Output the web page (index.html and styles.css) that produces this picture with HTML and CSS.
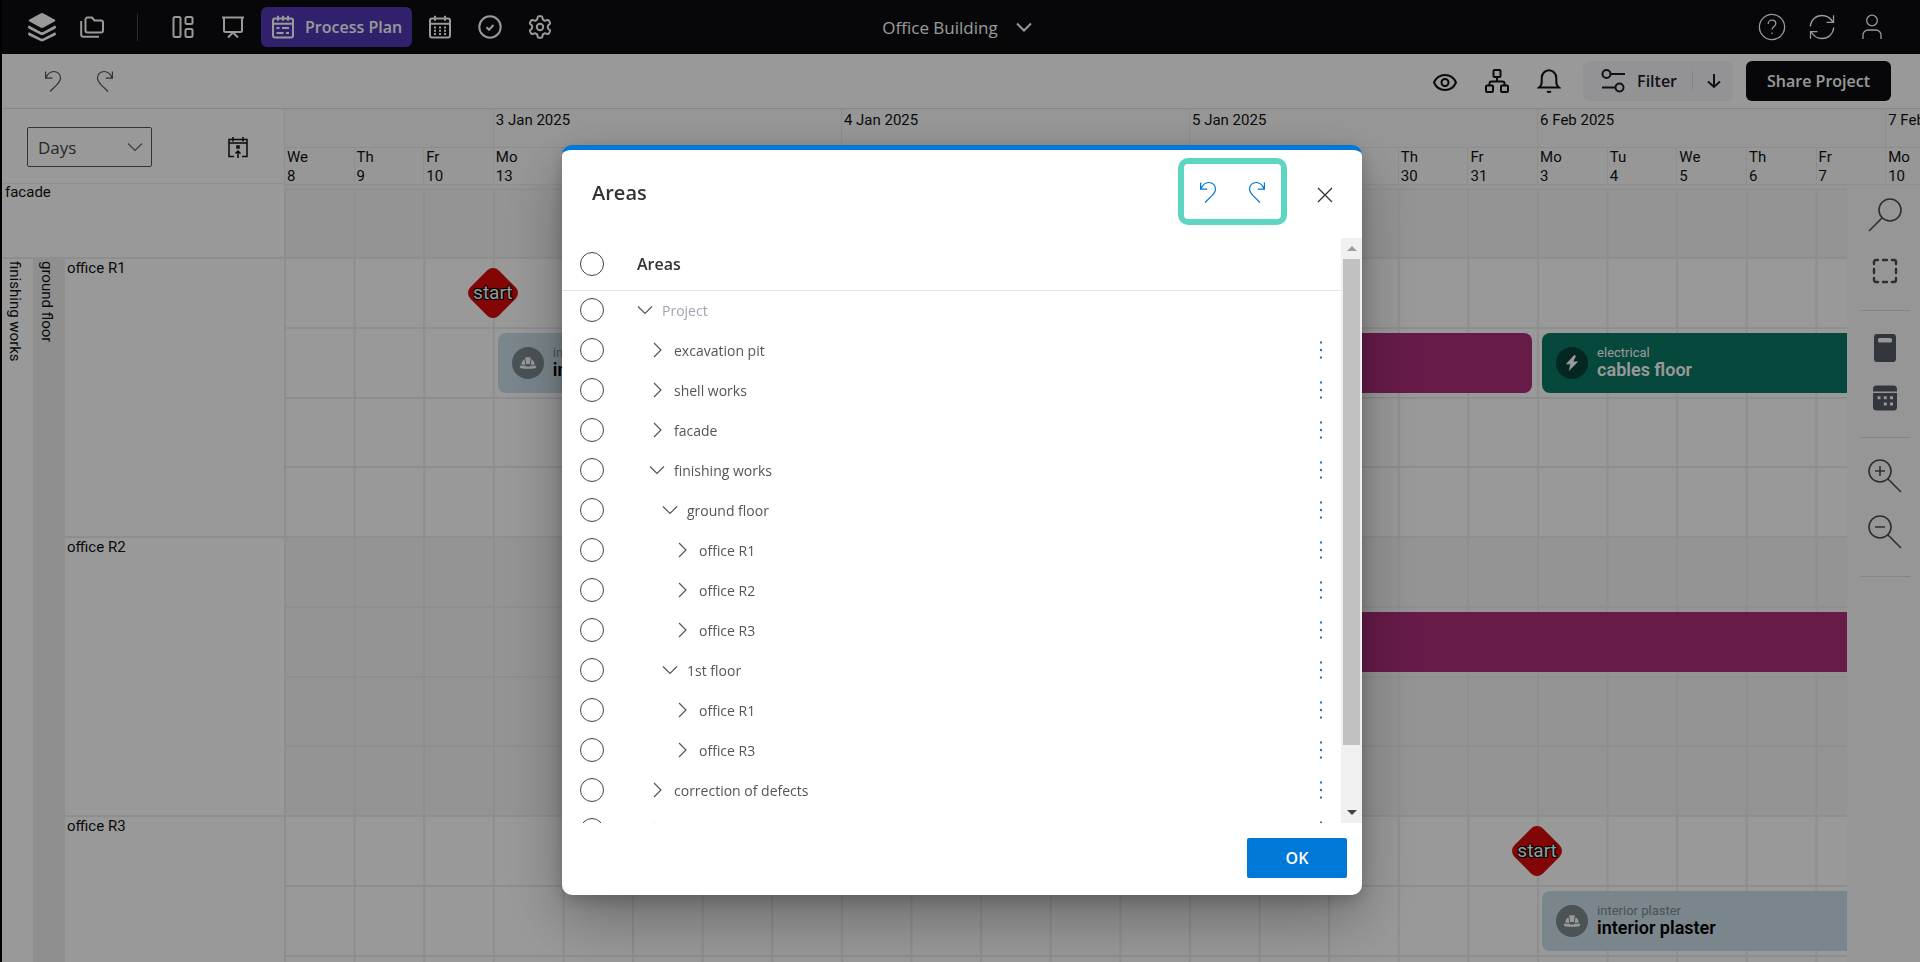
FILE: index.html
```html
<!DOCTYPE html>
<html lang="en">
<head>
<meta charset="utf-8">
<title>Office Building - Process Plan</title>
<link rel="stylesheet" href="styles.css">
</head>
<body>
<svg class="sprite" aria-hidden="true">
  <symbol id="i-undo" viewBox="0 0 18 22"><path d="M1.6 1.5v6.7h6.7M1.9 7.9C3.5 4 6.300 1.500 9.800 1.500c4 0 6.700 3 6.700 6.500 0 3-1.600 4.700-4 7.200L6 21.500"/></symbol>
  <symbol id="i-redo" viewBox="0 0 18 22"><path d="M16.400 1.500v6.700H9.700M16.100 7.900C14.500 4 11.700 1.500 8.200 1.500c-4 0-6.700 3-6.700 6.500 0 3 1.600 4.700 4 7.200l6.500 6.300"/></symbol>
  <symbol id="i-down" viewBox="0 0 16 16"><path d="M1 4.500l7 7 7-7"/></symbol>
  <symbol id="i-right" viewBox="0 0 16 16"><path d="M5 1l7 7-7 7"/></symbol>
  <symbol id="i-more" viewBox="0 0 4 20"><path d="M1 1.500h2v2H1zM1 9h2v2H1zM1 16.500h2v2H1z"/></symbol>
  <symbol id="i-helmet" viewBox="0 0 20 16"><path d="M7 1.500h6l-.8 7.500H7.800zM6 3.500C3.800 5 2.700 7.500 2.500 10h4.500zM14 3.500c2.200 1.500 3.300 4 3.500 6.500H13zM1 11h6.300l.4 1h4.600l.4-1H19v2.500c-5.500 1.300-12.500 1.300-18 0z"/></symbol>
</svg>

<div class="app">
  <header class="topbar">
    <nav class="topbar-side" aria-label="Modules">
      <button class="nav-btn" aria-label="Home"><svg class="logo" viewBox="0 0 30 30"><path d="M13.500 1.500q1.500-.8 3 0l11 6q1.800 1 0 2l-11 6q-1.500.8-3 0l-11-6q-1.800-1 0-2z"/><path d="M2 13.500l11.500 6.300q1.500.8 3 0L28 13.500q2 1.800 0 3.200l-11.500 6.100q-1.500.8-3 0L2 16.700q-2-1.400 0-3.200z"/><path d="M2 20.200l11.500 6.100q1.500.8 3 0L28 20.200q2 1.800 0 3.200l-11.500 5.600q-1.500.8-3 0L2 23.400q-2-1.400 0-3.200z"/></svg></button>
      <button class="nav-btn" aria-label="Projects"><svg class="ico" viewBox="0 0 24 24"><path d="M5.500 4.500v11a2 2 0 0 0 2 2H21a2 2 0 0 0 2-2V7.500a2 2 0 0 0-2-2h-6.500l-2.500-3H7.500a2 2 0 0 0-2 2zM1.200 6v13.500a2.200 2.200 0 0 0 2.200 2.200H19"/></svg></button>
      <span class="nav-rule"></span>
      <button class="nav-btn" aria-label="Dashboard"><svg class="ico" viewBox="0 0 24 24"><rect x="2.500" y="2" width="7" height="20" rx="1.500"/><rect x="14.500" y="2" width="7" height="7" rx="1.500"/><rect x="14.500" y="14" width="7" height="8" rx="1.500"/></svg></button>
      <button class="nav-btn" aria-label="Presentation"><svg class="ico" viewBox="0 0 24 24"><path d="M1 2.500h22M3 2.500v13a1.500 1.500 0 0 0 1.500 1.500h15a1.500 1.500 0 0 0 1.500-1.500v-13M7 22.500l5-5 5 5"/></svg></button>
      <button class="nav-btn nav-current"><svg class="ico" viewBox="0 0 24 24"><rect x="2" y="3.500" width="20" height="19" rx="2"/><path d="M7 .8v5M12 .8v5M17 .8v5M2 8.800h20M5.500 13h3M11 13h7M5.500 18h7M15 18h3"/></svg>Process Plan</button>
      <button class="nav-btn" aria-label="Calendar"><svg class="ico" viewBox="0 0 24 24"><rect x="2" y="3.500" width="20" height="19" rx="2"/><path d="M7 .8v5M17 .8v5M2 8.800h20M6 12.500h2M11 12.500h2M16 12.500h2M6 15.800h2M11 15.800h2M16 15.800h2M6 19h2M11 19h2M16 19h2"/></svg></button>
      <button class="nav-btn" aria-label="Tasks"><svg class="ico" viewBox="0 0 24 24"><circle cx="12" cy="12" r="10.700"/><path d="M8.500 12.200l2.500 2.500 4.500-4.700"/></svg></button>
      <button class="nav-btn" aria-label="Settings"><svg class="ico" viewBox="0 0 24 24"><path d="M10.800 1.200h2.400q.9 0 1.100 1l.4 1.900q.2.600.8.900l.9.500q.6.300 1.200.1l1.800-.6q.9-.3 1.400.5l1.200 2.100q.4.800-.2 1.400l-1.500 1.300q-.5.500-.5 1.100v1.200q0 .6.500 1.100l1.500 1.300q.6.600.2 1.400l-1.200 2.100q-.5.800-1.400.5l-1.800-.6q-.6-.2-1.200.1l-.9.500q-.6.300-.8.900l-.4 1.900q-.2 1-1.100 1h-2.400q-.9 0-1.100-1l-.4-1.900q-.2-.6-.8-.9l-.9-.5q-.6-.3-1.200-.1l-1.800.6q-.9.300-1.400-.5l-1.200-2.100q-.4-.8.2-1.400l1.500-1.300q.5-.5.5-1.100v-1.200q0-.6-.5-1.100L2.200 9q-.6-.6-.2-1.400l1.200-2.100q.5-.8 1.400-.5l1.800.6q.6.200 1.200-.1l.9-.5q.6-.3.8-.9l.4-1.900q.2-1 1.100-1z"/><circle cx="12" cy="12" r="3.200"/></svg></button>
    </nav>
    <button class="project-btn">Office Building<svg class="ico ico-16" viewBox="0 0 16 16"><use href="#i-down"/></svg></button>
    <div class="topbar-side topbar-end">
      <button class="nav-btn" aria-label="Help"><svg class="ico ico-28 thin" viewBox="0 0 28 28"><circle cx="14" cy="14" r="12.600"/><path d="M10.200 11c0-2.500 1.700-3.800 3.800-3.800s3.800 1.400 3.800 3.500c0 2.600-3.700 3-3.700 5.800M14 19.400v1.600"/></svg></button>
      <button class="nav-btn" aria-label="Refresh"><svg class="ico ico-28 thin" viewBox="0 0 28 28"><path d="M2.300 13.500C2.800 7 7.800 2.500 14 2.500c4.700 0 8.500 2.500 10.800 6.500M25.500 2.300v7h-7M25.700 14.500C25.200 21 20.200 25.500 14 25.500c-4.700 0-8.500-2.500-10.800-6.500M2.500 25.700v-7h7"/></svg></button>
      <button class="nav-btn" aria-label="Account"><svg class="ico ico-28 thin" viewBox="0 0 28 28"><circle cx="14" cy="7.500" r="5.300"/><path d="M5 26v-4a5 5 0 0 1 5-5h8a5 5 0 0 1 5 5v4"/></svg></button>
    </div>
  </header>

  <div class="toolbar">
    <div class="tool-group">
      <button class="tool-btn faint" aria-label="Undo"><svg class="arc"><use href="#i-undo"/></svg></button>
      <button class="tool-btn faint" aria-label="Redo"><svg class="arc"><use href="#i-redo"/></svg></button>
    </div>
    <div class="tool-group">
      <button class="tool-btn" aria-label="View"><svg class="ico" viewBox="0 0 24 24"><path d="M1 13.500C3 9 7 6 12 6s9 3 11 7.500C21 18 17 21 12 21S3 18 1 13.500z"/><circle cx="12" cy="13.500" r="3.500"/></svg></button>
      <button class="tool-btn" aria-label="Structure"><svg class="ico" viewBox="0 0 24 24"><rect x="8.500" y="1" width="7" height="7" rx="1"/><rect x="1" y="16.500" width="7" height="6.500" rx="1"/><rect x="16" y="16.500" width="7" height="6.500" rx="1"/><path d="M12 8v4.500M4.500 16.500v-2a2 2 0 0 1 2-2h11a2 2 0 0 1 2 2v2"/></svg></button>
      <button class="tool-btn" aria-label="Notifications"><svg class="ico" viewBox="0 0 24 24"><path d="M2 18.500h20c-1.800-1.300-2.700-3-2.700-5.500V9A7.300 7.800 0 0 0 4.700 9v4c0 2.500-.9 4.200-2.700 5.500zM10 22.300q2 1.500 4 0"/></svg></button>
      <div class="filter">
        <button class="filter-main"><svg class="ico" viewBox="0 0 24 24"><circle cx="5.500" cy="5" r="4"/><path d="M9.500 5H24M1 18.500h13.500"/><circle cx="18.500" cy="18.500" r="4"/></svg>Filter</button>
        <button class="filter-more" aria-label="Filter options"><svg class="ico ico-16" viewBox="0 0 16 16"><path d="M8 1v13M2 8.500L8 14l6-5.500"/></svg></button>
      </div>
      <button class="share-btn">Share Project</button>
    </div>
  </div>

  <main class="plan">
    <section class="areas-col" aria-label="Areas">
      <div class="corner">
        <div class="scale"><select class="scale-select" aria-label="Time scale"><option>Days</option></select><svg class="ico ico-16 scale-arrow"><use href="#i-down"/></svg></div>
        <button class="today-btn" aria-label="Go to today"><svg class="ico ico-22" viewBox="0 0 22 22"><path d="M7 20.500H2v-17h18v17h-5M2 7h18M6 1v4.500M16 1v4.500M11 22v-7M8.500 17.500L11 15l2.500 2.500M10 10h2v2h-2z"/></svg></button>
      </div>
      <div class="area-top">facade</div>
      <div class="area-group">
        <div class="area-side">finishing works</div>
        <div class="area-side shaded">ground floor</div>
        <div class="rooms">
          <div class="room">office R1</div>
          <div class="room">office R2</div>
          <div class="room">office R3</div>
        </div>
      </div>
    </section>

    <section class="timeline" aria-label="Timeline">
      <div class="months cols">
        <span class="month m0"></span><span class="month">3 Jan 2025</span><span class="month">4 Jan 2025</span><span class="month">5 Jan 2025</span><span class="month">6 Feb 2025</span><span class="month m-last">7 Feb 2025</span>
      </div>
      <div class="days cols">
        <span class="day">We<br>8</span><span class="day">Th<br>9</span><span class="day">Fr<br>10</span><span class="day">Mo<br>13</span><span class="day">Tu<br>14</span><span class="day">We<br>15</span><span class="day">Th<br>16</span><span class="day">Fr<br>17</span><span class="day">Mo<br>20</span><span class="day">Tu<br>21</span><span class="day">We<br>22</span><span class="day">Th<br>23</span><span class="day">Fr<br>24</span><span class="day">Mo<br>27</span><span class="day">Tu<br>28</span><span class="day">We<br>29</span><span class="day">Th<br>30</span><span class="day">Fr<br>31</span><span class="day">Mo<br>3</span><span class="day">Tu<br>4</span><span class="day">We<br>5</span><span class="day">Th<br>6</span><span class="day">Fr<br>7</span><span class="day d-last">Mo<br>10</span>
      </div>
      <div class="band band-top alt"><div class="lane cols"></div></div>
      <div class="band">
        <div class="lane cols"><div class="milestone at-13"><span class="milestone-label">start</span></div></div>
        <div class="lane cols">
          <div class="task plaster early"><span class="badge"><svg class="badge-ico"><use href="#i-helmet"/></svg></span><span class="task-text"><small class="trade">interior plaster</small><b class="task-name">interior plaster</b></span></div>
          <div class="task magenta mid"></div>
          <div class="task green late"><span class="badge"><svg class="badge-ico" viewBox="0 0 20 18"><path d="M12.500 0L3 10.500h5L6.500 18 17 7.300h-5.500L14.500 1z"/></svg></span><span class="task-text"><small class="trade">electrical</small><b class="task-name">cables floor</b></span></div>
        </div>
        <div class="lane cols"></div>
        <div class="lane cols"></div>
      </div>
      <div class="band alt">
        <div class="lane cols"></div>
        <div class="lane cols"><div class="task magenta long"></div></div>
        <div class="lane cols"></div>
        <div class="lane cols"></div>
      </div>
      <div class="band">
        <div class="lane cols"><div class="milestone at-3"><span class="milestone-label">start</span></div></div>
        <div class="lane cols"><div class="task plaster late"><span class="badge"><svg class="badge-ico"><use href="#i-helmet"/></svg></span><span class="task-text"><small class="trade">interior plaster</small><b class="task-name">interior plaster</b></span></div></div>
        <div class="lane cols"></div>
        <div class="lane cols"></div>
      </div>

      <aside class="rail" aria-label="Plan tools">
        <div class="rail-group">
          <button class="rail-btn" aria-label="Search"><svg class="ico ico-36 mid-stroke" viewBox="0 0 36 36"><circle cx="23" cy="13" r="11"/><path d="M15.200 20.800L2 34"/></svg></button>
          <button class="rail-btn" aria-label="Select area"><svg class="ico ico-28 dash" viewBox="0 0 28 28"><path d="M3 7V5q0-2 2-2h2M21 3h2q2 0 2 2v2M25 21v2q0 2-2 2h-2M7 25H5q-2 0-2-2v-2M12 3h4M12 25h4M3 12v4M25 12v4"/></svg></button>
        </div>
        <div class="rail-group tight">
          <button class="rail-btn" aria-label="Calculator"><svg class="ico-28 solid" viewBox="0 0 28 28"><path fill-rule="evenodd" d="M6 0h16a3 3 0 0 1 3 3v22a3 3 0 0 1-3 3H6a3 3 0 0 1-3-3V3a3 3 0 0 1 3-3zm2.500 4a1.500 1.500 0 0 0-1.500 1.500V7a1.500 1.500 0 0 0 1.500 1.500h11A1.500 1.500 0 0 0 21 7V5.500A1.500 1.500 0 0 0 19.500 4z"/></svg></button>
          <button class="rail-btn" aria-label="Calendar view"><svg class="ico-28 solid" viewBox="0 0 28 28"><path d="M2 7.500V5a3.500 3.500 0 0 1 3.500-3.500h17A3.500 3.500 0 0 1 26 5v2.500z"/><path fill-rule="evenodd" d="M2 9h24v14a3.500 3.500 0 0 1-3.500 3.500h-17A3.500 3.500 0 0 1 2 23zM6.500 12.200v3h3v-3zm6.300 0v3h3v-3zm6.200 0v3h3v-3zm-6.200 6.300v3h3v-3zm6.200 0v3h3v-3z"/></svg></button>
        </div>
        <div class="rail-group zooms">
          <button class="rail-btn" aria-label="Zoom in"><svg class="ico ico-36 mid-stroke" viewBox="0 0 36 36"><circle cx="13" cy="13" r="11"/><path d="M20.800 20.800L34 34M13 8v10M8 13h10"/></svg></button>
          <button class="rail-btn" aria-label="Zoom out"><svg class="ico ico-36 mid-stroke" viewBox="0 0 36 36"><circle cx="13" cy="13" r="11"/><path d="M20.800 20.800L34 34M8 13h10"/></svg></button>
        </div>
      </aside>
    </section>
  </main>
</div>

<div class="overlay">
  <div class="dialog" role="dialog" aria-modal="true" aria-labelledby="dlg-title">
    <div class="dialog-head">
      <h2 class="dialog-title" id="dlg-title">Areas</h2>
      <div class="history">
        <button class="history-btn" aria-label="Undo"><svg class="arc"><use href="#i-undo"/></svg></button>
        <button class="history-btn" aria-label="Redo"><svg class="arc"><use href="#i-redo"/></svg></button>
      </div>
      <button class="close-btn" aria-label="Close"><svg class="ico ico-16 thin" viewBox="0 0 16 16"><path d="M1 1l14 14M15 1L1 15"/></svg></button>
    </div>
    <div class="dialog-body">
      <div class="tree-wrap">
        <table class="tree">
          <thead><tr><th class="c-check"><input class="check" type="checkbox" aria-label="Select all"></th><th class="c-name">Areas</th><th class="c-more"></th></tr></thead>
          <tbody>
            <tr><td class="c-check"><input class="check" type="checkbox" aria-labelledby="a0"></td><td class="c-name root"><svg class="twist"><use href="#i-down"/></svg><span id="a0">Project</span></td><td class="c-more"></td></tr>
            <tr><td class="c-check"><input class="check" type="checkbox" aria-labelledby="a1"></td><td class="c-name l1"><svg class="twist"><use href="#i-right"/></svg><span id="a1">excavation pit</span></td><td class="c-more"><button class="more" aria-label="More"><svg class="dots"><use href="#i-more"/></svg></button></td></tr>
            <tr><td class="c-check"><input class="check" type="checkbox" aria-labelledby="a2"></td><td class="c-name l1"><svg class="twist"><use href="#i-right"/></svg><span id="a2">shell works</span></td><td class="c-more"><button class="more" aria-label="More"><svg class="dots"><use href="#i-more"/></svg></button></td></tr>
            <tr><td class="c-check"><input class="check" type="checkbox" aria-labelledby="a3"></td><td class="c-name l1"><svg class="twist"><use href="#i-right"/></svg><span id="a3">facade</span></td><td class="c-more"><button class="more" aria-label="More"><svg class="dots"><use href="#i-more"/></svg></button></td></tr>
            <tr><td class="c-check"><input class="check" type="checkbox" aria-labelledby="a4"></td><td class="c-name l1"><svg class="twist"><use href="#i-down"/></svg><span id="a4">finishing works</span></td><td class="c-more"><button class="more" aria-label="More"><svg class="dots"><use href="#i-more"/></svg></button></td></tr>
            <tr><td class="c-check"><input class="check" type="checkbox" aria-labelledby="a5"></td><td class="c-name l2"><svg class="twist"><use href="#i-down"/></svg><span id="a5">ground floor</span></td><td class="c-more"><button class="more" aria-label="More"><svg class="dots"><use href="#i-more"/></svg></button></td></tr>
            <tr><td class="c-check"><input class="check" type="checkbox" aria-labelledby="a6"></td><td class="c-name l3"><svg class="twist"><use href="#i-right"/></svg><span id="a6">office R1</span></td><td class="c-more"><button class="more" aria-label="More"><svg class="dots"><use href="#i-more"/></svg></button></td></tr>
            <tr><td class="c-check"><input class="check" type="checkbox" aria-labelledby="a7"></td><td class="c-name l3"><svg class="twist"><use href="#i-right"/></svg><span id="a7">office R2</span></td><td class="c-more"><button class="more" aria-label="More"><svg class="dots"><use href="#i-more"/></svg></button></td></tr>
            <tr><td class="c-check"><input class="check" type="checkbox" aria-labelledby="a8"></td><td class="c-name l3"><svg class="twist"><use href="#i-right"/></svg><span id="a8">office R3</span></td><td class="c-more"><button class="more" aria-label="More"><svg class="dots"><use href="#i-more"/></svg></button></td></tr>
            <tr><td class="c-check"><input class="check" type="checkbox" aria-labelledby="a9"></td><td class="c-name l2"><svg class="twist"><use href="#i-down"/></svg><span id="a9">1st floor</span></td><td class="c-more"><button class="more" aria-label="More"><svg class="dots"><use href="#i-more"/></svg></button></td></tr>
            <tr><td class="c-check"><input class="check" type="checkbox" aria-labelledby="a10"></td><td class="c-name l3"><svg class="twist"><use href="#i-right"/></svg><span id="a10">office R1</span></td><td class="c-more"><button class="more" aria-label="More"><svg class="dots"><use href="#i-more"/></svg></button></td></tr>
            <tr><td class="c-check"><input class="check" type="checkbox" aria-labelledby="a11"></td><td class="c-name l3"><svg class="twist"><use href="#i-right"/></svg><span id="a11">office R3</span></td><td class="c-more"><button class="more" aria-label="More"><svg class="dots"><use href="#i-more"/></svg></button></td></tr>
            <tr><td class="c-check"><input class="check" type="checkbox" aria-labelledby="a12"></td><td class="c-name l1"><svg class="twist"><use href="#i-right"/></svg><span id="a12">correction of defects</span></td><td class="c-more"><button class="more" aria-label="More"><svg class="dots"><use href="#i-more"/></svg></button></td></tr>
            <tr><td class="c-check"><input class="check" type="checkbox" aria-label="Next area"></td><td class="c-name l1"><svg class="twist"><use href="#i-right"/></svg></td><td class="c-more"><button class="more" aria-label="More"><svg class="dots"><use href="#i-more"/></svg></button></td></tr>
          </tbody>
        </table>
      </div>
      <div class="scrollbar" aria-hidden="true"><span class="scroll-arrow up"></span><span class="scroll-thumb"></span><span class="scroll-arrow dn"></span></div>
    </div>
    <div class="dialog-foot"><button class="ok-btn">OK</button></div>
  </div>
</div>
</body>
</html>
```
FILE: styles.css
```css
* { box-sizing: border-box; }
:root {
  --ui: "Open Sans", "Noto Sans", sans-serif;
  --plan: Roboto, "Liberation Sans", sans-serif;
  --line: #ededed;
}
body { margin: 0; height: 100vh; overflow: hidden; font-family: var(--ui); font-size: 16px; color: #111; background: #fff; }
button { font: inherit; color: inherit; border: 0; padding: 0; background: none; display: flex; align-items: center; justify-content: center; }
svg { display: block; flex: none; }
.sprite { position: absolute; width: 0; height: 0; }
.ico, .arc, .twist { fill: none; stroke: currentColor; stroke-width: 2; }
.ico { width: 24px; height: 24px; }
.ico-16 { width: 16px; height: 16px; }
.ico-22 { width: 22px; height: 22px; stroke-width: 1.5; }
.ico-28 { width: 28px; height: 28px; }
.ico-36 { width: 36px; height: 36px; }
.thin { stroke-width: 1.3; }
.mid-stroke { stroke-width: 1.6; }
.dash { stroke-width: 2.4; stroke-linecap: round; }
.solid { fill: #565a66; }
.arc { width: 18px; height: 22px; stroke-width: 1.2; }

.app { display: flex; flex-direction: column; height: 100vh; border-left: 2px solid #000; }

.topbar { flex: none; display: grid; grid-template-columns: 1fr auto 1fr; align-items: center; height: 54px; padding: 0 23px 0 15px; background: #0c0c11; color: #fff; }
.topbar-side { display: flex; align-items: center; }
.topbar-end { justify-content: flex-end; }
.nav-btn { width: 50px; height: 40px; }
.nav-rule { width: 1px; height: 27px; margin: 0 20px; background: #4a4a50; }
.nav-current { width: auto; margin: 0 3px; padding: 0 10px; gap: 10px; border-radius: 6px; background: #5238b6; font-weight: 600; }
.logo { width: 30px; height: 30px; fill: currentColor; }
.project-btn { gap: 18px; font-size: 17px; }

.toolbar { flex: none; display: flex; justify-content: space-between; align-items: center; height: 55px; padding: 0 29px 0 26px; border-bottom: 1px solid #e2e2e2; }
.tool-group { display: flex; align-items: center; gap: 2px; }
.tool-btn { width: 50px; height: 40px; }
.faint { color: #555; }
.filter { display: flex; align-items: center; height: 40px; margin: 0 11px 0 7px; border-radius: 6px; background: #f6f6f9; color: #1a1c2c; }
.filter-main { gap: 12px; padding: 0 15px 0 18px; font-weight: 600; }
.filter-more { height: 20px; padding: 0 11px 0 13px; border-left: 1px solid #dcdce2; }
.share-btn { height: 40px; padding: 0 21px; border-radius: 6px; background: #0c0c11; color: #fff; font-weight: 600; }

.plan { flex: 1; min-height: 0; display: grid; grid-template-columns: 282px 1fr; overflow: hidden; font-family: var(--plan); font-size: 15px; line-height: 19px; }
.corner { display: flex; justify-content: space-between; align-items: center; height: 75px; padding: 2px 35px 0 25px; border-bottom: 1px solid var(--line); }
.scale { position: relative; }
.scale-select { appearance: none; width: 125px; height: 40px; padding: 0 10px; border: 1px solid #555; border-radius: 2px; background: none; font: 17px var(--ui); color: #444; }
.scale-arrow { position: absolute; right: 9px; top: 12px; color: #666; stroke-width: 1.2; pointer-events: none; }
.today-btn { color: #111; }
.area-top { height: 75px; padding: 0 3px; border-bottom: 2px solid var(--line); line-height: 17px; }
.area-group { display: grid; grid-template-columns: 31px 32px 1fr; }
.area-side { display: flex; align-items: center; writing-mode: vertical-rl; padding: 2px 6px 0 0; }
.area-side.shaded { background: #efefef; }
.room { height: 279px; padding: 0 2px; border-bottom: 2px solid var(--line); }

.timeline { position: relative; min-width: 0; }
.cols { display: grid; grid-template-columns: repeat(23, minmax(0, 2fr)) minmax(0, 1fr); }
.months { height: 39px; background: #fbfbfb; border-bottom: 1px solid var(--line); }
.month, .day { overflow: hidden; white-space: nowrap; border-left: 1px solid var(--line); padding-left: 2px; }
.month { grid-column: span 5; padding-top: 2px; }
.m0 { grid-column: span 3; }
.m-last { grid-column: span 1; }
.days { height: 37px; background: #fcfcfc; border-bottom: 1px solid var(--line); }
.band { display: flex; flex-direction: column; height: 279px; }
.band-top { height: 74px; padding-top: 4px; }
.alt { background-color: #f7f7f7; }
.lane { flex: 1; align-items: center; border-bottom: 2px solid var(--line); background: linear-gradient(90deg, var(--line) 2px, transparent 2px) 0 0 / calc(100% / 23.5) 100%; }
.band-top .lane { border-top: 1px solid var(--line); }
.lane > * { grid-row: 1; }
.task { display: flex; align-items: center; gap: 9px; height: 60px; margin: 0 5px; padding-left: 14px; border-radius: 8px; overflow: hidden; white-space: nowrap; }
.early { grid-column: 4 / 8; }
.mid { grid-column: 8 / 19; }
.late { grid-column: 19 / 25; }
.long { grid-column: 9 / 25; }
.plaster { background: #cbdfe8; color: #000; }
.magenta { background: #ac2d7b; }
.green { background: #0a7864; color: #fff; }
.badge { display: flex; align-items: center; justify-content: center; width: 32px; height: 32px; border-radius: 50%; background: #7d8a8f; color: #fff; }
.green .badge { background: #074438; }
.badge-ico { width: 18px; height: 16px; fill: currentColor; }
.task-text { display: flex; flex-direction: column; padding-bottom: 1px; }
.trade { font-size: 13px; line-height: 14px; }
.plaster .trade { color: #7d8a8f; }
.task-name { font-size: 18px; font-weight: 600; line-height: 19px; }
.milestone { position: relative; display: flex; align-items: center; justify-content: center; width: 52px; height: 52px; margin-left: -26px; }
.milestone::before { content: ""; position: absolute; inset: 6px; border-radius: 8px; background: #d90a0a; transform: rotate(45deg); }
.milestone-label { position: relative; color: #fff; font-size: 19px; text-shadow: 1px 1px 0 #000, -1px 1px 0 #000, 1px -1px 0 #000, -1px -1px 0 #000; }
.at-13 { grid-column: 4; }
.at-3 { grid-column: 19; }

.rail { position: absolute; top: 76px; right: 0; bottom: 0; width: 73px; padding-left: 13px; background: #fafafa; color: #4d4d4d; }
.rail-group { display: flex; flex-direction: column; gap: 20px; width: 50px; padding: 12px 0 21px; border-bottom: 1px solid #dedede; }
.rail-group.tight { gap: 14px; padding: 19px 0 21px; }
.rail-group.zooms { padding: 20px 0 26px; }
.rail-btn { height: 36px; }

.overlay { position: fixed; inset: 0; display: flex; align-items: flex-start; justify-content: center; padding: 145px 0 0 4px; background: rgba(0, 0, 0, .4); }
.dialog { width: 800px; border-top: 5px solid #0078d7; border-radius: 10px; background: #fff; color: #333; box-shadow: 0 24px 60px rgba(0, 0, 0, .3), 0 5px 16px rgba(0, 0, 0, .2); }
.dialog-head { display: flex; align-items: flex-start; height: 88px; padding: 8px 19px 0 30px; }
.dialog-title { flex: 1; margin: 0; padding-top: 22px; font-size: 20px; line-height: 26px; font-weight: 600; }
.history { display: flex; width: 109px; height: 67px; border: 6px solid #5cd6c0; border-radius: 10px; color: #0078d7; }
.history-btn { flex: 1; }
.close-btn { width: 36px; height: 36px; margin: 19px 0 0 20px; color: #333; }
.dialog-body { display: flex; height: 585px; overflow: hidden; }
.tree-wrap { flex: 1; }
.tree { width: 100%; border-collapse: collapse; table-layout: fixed; }
.tree tr { height: 40px; }
.tree thead tr { height: 52px; border-bottom: 1px solid #e4e4e4; }
.tree th, .tree td { padding: 0; text-align: left; vertical-align: middle; }
.c-check { width: 75px; }
.tree .c-check { padding-left: 18px; }
.check { appearance: none; display: block; width: 24px; height: 24px; margin: 0; border: 1px solid #444; border-radius: 50%; background: #fff; }
.tree th.c-name { font-size: 16px; font-weight: 600; }
.tree td.c-name { font-size: 14px; color: #555; }
.twist { display: inline-block; width: 16px; height: 16px; margin-right: 9px; vertical-align: -2px; stroke-width: 1.2; color: #555; }
.tree td.root { color: #a0a4b0; }
.tree .l1 { padding-left: 12px; }
.tree .l2 { padding-left: 25px; }
.tree .l3 { padding-left: 37px; }
.c-more { width: 30px; }
.more { width: 20px; height: 30px; }
.dots { width: 4px; height: 20px; fill: #1f74c4; }
.scrollbar { display: flex; flex-direction: column; align-items: center; width: 21px; background: #f0f0f0; }
.scroll-arrow { display: flex; align-items: center; justify-content: center; width: 20px; height: 21px; }
.scroll-arrow::before { content: ""; border: 5px solid transparent; }
.up::before { border-top: 0; border-bottom-color: #a0a0a0; }
.dn { margin-top: auto; }
.dn::before { border-bottom: 0; border-top-color: #444; }
.scroll-thumb { width: 17px; height: 486px; background: #c1c1c1; }
.dialog-foot { display: flex; justify-content: flex-end; padding: 15px 15px 17px; }
.ok-btn { width: 100px; height: 40px; border-radius: 2px; background: #0078d7; color: #fff; font-size: 16px; font-weight: 600; }
```
